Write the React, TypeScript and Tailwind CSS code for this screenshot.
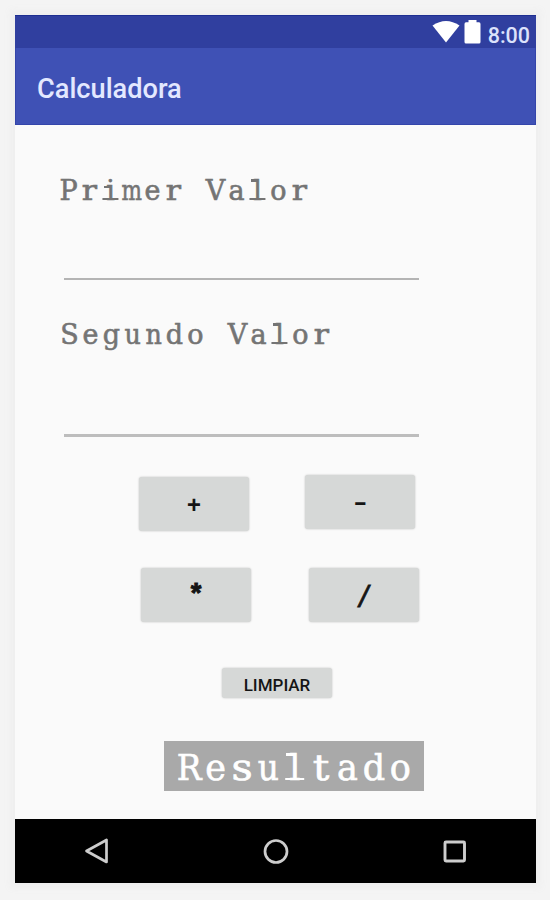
import React from "react";

type Size = "label" | "result";

// Typewriter lettering: every character sits in a cell of equal width.
function Typewriter({ text, size }: { text: string; size: Size }) {
  const cell = size === "label" ? "w-[21px]" : "w-[26.4px]";
  const weight = size === "label" ? "[-webkit-text-stroke:0.6px_#747474]" : "[-webkit-text-stroke:0.6px_white]";
  return (
    <span className={`block whitespace-pre font-['DejaVu_Serif',serif] ${weight}`}>
      {text.split("").map((c, i) => {
        let shape = "";
        if (c === "m") shape = "-ml-[3px] -mr-[3px] scale-x-[0.8]";
        else if (c === "u" || c === "n" || c === "R") shape = "scale-x-[0.94]";
        else if (c === "r" || c === "t" || c === "s") shape = "scale-x-[1.18]";
        // Narrow letters get wide slab serifs so they fill the cell.
        else if (c === "l")
          shape =
            "relative before:absolute before:bottom-[0.94em] before:right-[50%] before:h-[0.08em] before:w-[0.24em] before:bg-current after:absolute after:bottom-[0.245em] after:left-1/2 after:h-[0.08em] after:w-[0.56em] after:-translate-x-1/2 after:bg-current";
        else if (c === "i")
          shape =
            "relative before:absolute before:bottom-[0.71em] before:right-[50%] before:h-[0.08em] before:w-[0.24em] before:bg-current after:absolute after:bottom-[0.245em] after:left-1/2 after:h-[0.08em] after:w-[0.56em] after:-translate-x-1/2 after:bg-current";
        return (
          <span key={i} className={`inline-block text-center ${cell}`}>
            <span className={`inline-block ${shape}`}>{c}</span>
          </span>
        );
      })}
    </span>
  );
}

function Key({ children, className }: { children: React.ReactNode; className: string }) {
  return (
    <button
      className={`flex items-center justify-center rounded-[3px] bg-[#d6d8d7] text-[#151515] shadow-[0_0_2px_rgba(0,0,0,0.25)] ${className}`}
    >
      {children}
    </button>
  );
}

export default function App() {
  return (
    <div className="h-[900px] w-[550px] overflow-hidden bg-[#f4f4f4] pl-[15px] pt-[15px] font-[Roboto,sans-serif]">
      <div className="flex h-[868px] w-[521px] flex-col bg-[#fafafa] shadow-[0_0_7px_5px_#efefef]">
        <header className="h-[110px] shrink-0 bg-[#3f51b5] shadow-[inset_0_0_0_1px_#3445aa]">
          <div className="flex h-[33px] items-start justify-end bg-[#303f9f] pr-[6px] shadow-[inset_0_1px_0_#1d2e91]">
            <svg className="mt-[6px] h-[22px] w-[28px]" viewBox="0 0 28 22" fill="white">
              <path d="M0.5 4.5Q14 -4.5 27.5 4.5L14 21.5Z" />
            </svg>
            <svg className="ml-[4px] mt-[5px] h-[24px] w-[17px]" viewBox="0 0 17 24" fill="white">
              <path d="M4.5 0H12.5V2.3H15Q16.5 2.3 16.5 4V22Q16.5 23.5 15 23.5H2Q.5 23.5 .5 22V4Q.5 2.3 2 2.3H4.5Z" />
            </svg>
            <span className="ml-[7px] mt-[8px] text-[21.5px] font-medium leading-[25px] text-[#dce2fb]">8:00</span>
          </div>
          <h1 className="pl-[22px] pt-[26px] text-[27.2px] font-medium leading-[30px] text-[#e3e8ff]">Calculadora</h1>
        </header>

        <main className="h-[694px] shrink-0">
          <div className="flex h-[155px] flex-col justify-between pl-[43px] pt-[50px]">
            <label className="h-[32px] text-[27px] leading-[32px] text-[#747474]"><Typewriter text="Primer Valor" size="label" /></label>
            <div className="ml-[6px] h-[2px] w-[355px] bg-[#b4b4b4]" />
          </div>
          <div className="flex h-[157px] flex-col justify-between pl-[44px] pt-[39px]">
            <label className="h-[32px] text-[27px] leading-[32px] text-[#747474]"><Typewriter text="Segundo Valor" size="label" /></label>
            <div className="ml-[5px] h-[3px] w-[355px] bg-[#bdbdbd]" />
          </div>
          <div className="flex items-start pl-[124px] pt-[38px] font-['Liberation_Mono',monospace] text-[24px] font-bold">
            <Key className="mt-[2px] h-[54px] w-[110px] pt-[6px]">+</Key>
            <Key className="ml-[56px] h-[54px] w-[110px] pt-[4px]"><span className="inline-block scale-x-[1.5]">-</span></Key>
          </div>
          <div className="flex pl-[126px] pt-[37px] font-['Liberation_Mono',monospace] text-[27px] font-bold">
            <Key className="h-[54px] w-[110px] pt-[2px] [-webkit-text-stroke:1px_#151515]">*</Key>
            <Key className="ml-[58px] h-[54px] w-[110px] pt-[8px] !font-normal [-webkit-text-stroke:0.7px_#151515]"><span className="inline-block scale-y-110">/</span></Key>
          </div>
          <div className="pl-[207px] pt-[46px] text-[17px] font-medium">
            <Key className="h-[30px] w-[110px] pt-[5px]">LIMPIAR</Key>
          </div>
          <div className="ml-[149px] mt-[43px] h-[50px] w-[260px] bg-[#a9a9a9] pl-[12px] pt-[6px] text-[35px] leading-[42px] text-white">
            <Typewriter text="Resultado" size="result" />
          </div>
        </main>

        <nav className="flex h-[64px] shrink-0 items-center bg-black pl-[69px]">
          <svg className="mt-[2px] h-[28px] w-[26px]" viewBox="0 0 26 28" fill="none" stroke="#cdcdcd" strokeWidth="2.7" strokeLinejoin="round">
            <path d="M2.5 13L22.5 2V24Z" />
          </svg>
          <svg className="ml-[152px] h-[28px] w-[28px]" viewBox="0 0 28 28" fill="none" stroke="#cdcdcd" strokeWidth="2.7">
            <circle cx="14" cy="14.5" r="11" />
          </svg>
          <svg className="ml-[152px] h-[26px] w-[26px]" viewBox="0 0 26 26" fill="none" stroke="#cdcdcd" strokeWidth="2.9">
            <rect x="3" y="4" width="19.5" height="19" rx="1" />
          </svg>
        </nav>
      </div>
    </div>
  );
}
